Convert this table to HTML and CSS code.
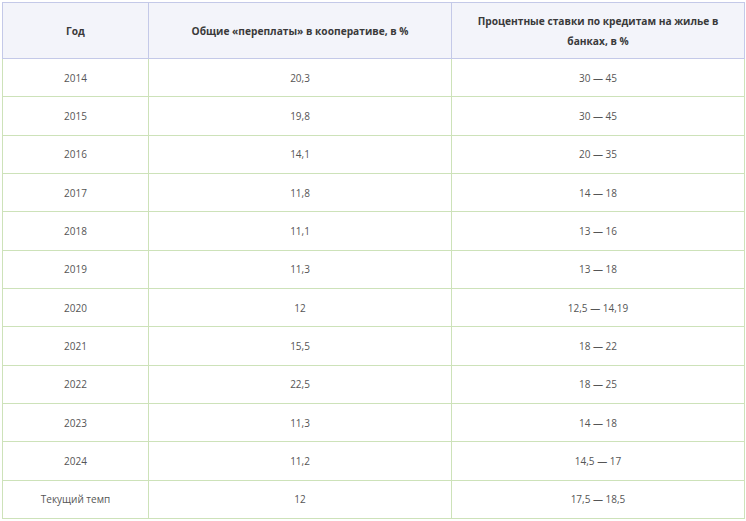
FILE: index.html
```html
<!DOCTYPE html>
<html lang="ru">
<head>
<meta charset="utf-8">
<link rel="stylesheet" href="styles.css">
</head>
<body>
<div class="wrap">
<table class="rates">
  <colgroup><col class="c1"><col class="c2"><col class="c3"></colgroup>
  <thead>
    <tr><th>Год</th><th>Общие «переплаты» в кооперативе, в %</th><th>Процентные ставки по кредитам на жилье в банках, в %</th></tr>
  </thead>
  <tbody>
    <tr><td>2014</td><td>20,3</td><td>30 — 45</td></tr>
    <tr><td>2015</td><td>19,8</td><td>30 — 45</td></tr>
    <tr><td>2016</td><td>14,1</td><td>20 — 35</td></tr>
    <tr><td>2017</td><td>11,8</td><td>14 — 18</td></tr>
    <tr><td>2018</td><td>11,1</td><td>13 — 16</td></tr>
    <tr><td>2019</td><td>11,3</td><td>13 — 18</td></tr>
    <tr><td>2020</td><td>12</td><td>12,5 — 14,19</td></tr>
    <tr><td>2021</td><td>15,5</td><td>18 — 22</td></tr>
    <tr><td>2022</td><td>22,5</td><td>18 — 25</td></tr>
    <tr><td>2023</td><td>11,3</td><td>14 — 18</td></tr>
    <tr><td>2024</td><td>11,2</td><td>14,5 — 17</td></tr>
    <tr><td>Текущий темп</td><td>12</td><td>17,5 — 18,5</td></tr>
  </tbody>
</table>
</div>
</body>
</html>
```
FILE: styles.css
```css
html, body {
  margin: 0;
  padding: 0;
  background: #fff;
}
.wrap {
  padding: 2px;
}
.rates {
  width: 742px;
  border-collapse: collapse;
  table-layout: fixed;
  font-family: "Open Sans", "DejaVu Sans", sans-serif;
}
.c1 { width: 146px; }
.c2 { width: 303px; }
.c3 { width: 293px; }
.rates th {
  background: #f3f4fa;
  border: 1px solid #c4c9e8;
  height: 55px;
  padding: 0 20px;
  font-size: 10.2px;
  font-weight: 700;
  line-height: 20px;
  color: #3a3a3a;
  text-align: center;
  vertical-align: middle;
}
.rates td {
  border: 1px solid #cde2b9;
  height: 37.33px;
  padding: 0 10px;
  font-size: 10px;
  color: #555;
  text-align: center;
  vertical-align: middle;
}
```
